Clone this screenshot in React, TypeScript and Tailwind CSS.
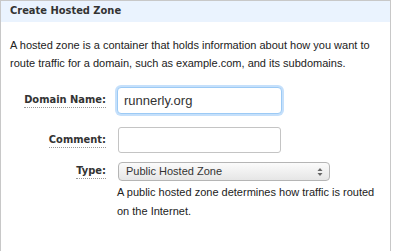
import React from "react";

export default function App() {
  const label = "text-right text-[11px] font-bold text-[#333] [font-family:'DejaVu_Sans_Condensed','DejaVu_Sans',sans-serif] border-b border-dotted border-[#999] leading-[14px]";
  return (
    <div className="w-[399px] h-[251px] bg-white overflow-hidden [font-family:'Liberation_Sans',Arial,sans-serif]">
      <div className="w-[391px] h-[260px] border border-[#c8c8c8] border-b-0">
        <div className="h-[21px] bg-[#eaf3fe] pl-[9px] flex items-center text-[11px] font-bold text-[#333] [font-family:'DejaVu_Sans_Condensed','DejaVu_Sans',sans-serif]">
          Create Hosted Zone
        </div>
        <p className="px-[9px] pt-[14px] text-[11px] leading-[18px] text-[#222]">
          A hosted zone is a container that holds information about how you want to route traffic for a domain, such as example.com, and its subdomains.
        </p>
        <div className="grid grid-cols-[105px_1fr] gap-x-[11px] mt-[15px]">
          <div className="flex justify-end items-center h-[26px]">
            <span className={label}>Domain Name:</span>
          </div>
          <div>
            <div className="w-[165px] h-[27px] rounded-[4px] border border-[#9ccaf5] shadow-[0_0_0_2px_#c5e0fb] bg-white flex items-center pl-[6px] text-[13px] text-[#333]">
              runnerly.org
            </div>
          </div>
          <div className="flex justify-end items-center h-[26px] mt-[13px]">
            <span className={label}>Comment:</span>
          </div>
          <div className="mt-[13px]">
            <div className="w-[163px] h-[26px] ml-[1px] rounded-[3px] border border-[#c4c4c4] bg-white" />
          </div>
          <div className="flex justify-end items-center h-[19px] mt-[9px]">
            <span className={label}>Type:</span>
          </div>
          <div className="mt-[9px]">
            <div className="w-[212px] h-[19px] ml-[1px] rounded-[4px] border border-[#b5b5b5] bg-gradient-to-b from-[#fbfbfb] to-[#e6e6e6] flex items-center justify-between pl-[7px] pr-[6px] text-[11px] text-[#333]">
              <span>Public Hosted Zone</span>
              <svg width="6" height="10" viewBox="0 0 6 10">
                <path d="M3 1 L5.5 4 H0.5 Z" fill="#666" />
                <path d="M3 9 L5.5 6 H0.5 Z" fill="#666" />
              </svg>
            </div>
            <p className="mt-[2px] text-[11px] leading-[19px] text-[#222] w-[262px]">
              A public hosted zone determines how traffic is routed on the Internet.
            </p>
          </div>
        </div>
      </div>
    </div>
  );
}
